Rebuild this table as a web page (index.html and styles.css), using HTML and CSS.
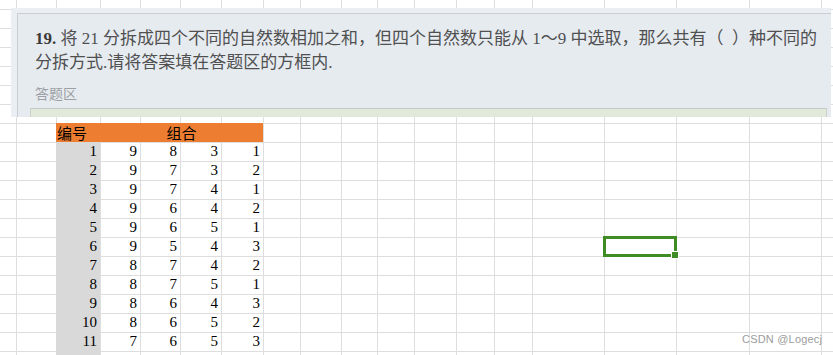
FILE: index.html
```html
<!DOCTYPE html>
<html lang="zh-CN">
<head>
<meta charset="utf-8">
<title>分拆组合</title>
<link rel="stylesheet" href="styles.css">
</head>
<body>
<div class="sheet">
  <div class="data">
    <div class="cell head">编号</div>
    <div class="cell head merged">组合</div>

    <div class="cell idx">1</div><div class="cell">9</div><div class="cell">8</div><div class="cell">3</div><div class="cell">1</div>
    <div class="cell idx">2</div><div class="cell">9</div><div class="cell">7</div><div class="cell">3</div><div class="cell">2</div>
    <div class="cell idx">3</div><div class="cell">9</div><div class="cell">7</div><div class="cell">4</div><div class="cell">1</div>
    <div class="cell idx">4</div><div class="cell">9</div><div class="cell">6</div><div class="cell">4</div><div class="cell">2</div>
    <div class="cell idx">5</div><div class="cell">9</div><div class="cell">6</div><div class="cell">5</div><div class="cell">1</div>
    <div class="cell idx">6</div><div class="cell">9</div><div class="cell">5</div><div class="cell">4</div><div class="cell">3</div>
    <div class="cell idx">7</div><div class="cell">8</div><div class="cell">7</div><div class="cell">4</div><div class="cell">2</div>
    <div class="cell idx">8</div><div class="cell">8</div><div class="cell">7</div><div class="cell">5</div><div class="cell">1</div>
    <div class="cell idx">9</div><div class="cell">8</div><div class="cell">6</div><div class="cell">4</div><div class="cell">3</div>
    <div class="cell idx">10</div><div class="cell">8</div><div class="cell">6</div><div class="cell">5</div><div class="cell">2</div>
    <div class="cell idx">11</div><div class="cell">7</div><div class="cell">6</div><div class="cell">5</div><div class="cell">3</div>
    <div class="cell idx"></div>
  </div>

  <div class="question">
    <div class="card">
      <p class="stem"><b class="num">19.</b> 将 21 分拆成四个不同的自然数相加之和，但四个自然数只能从 1～9 中选取，那么共有（&ensp;）种不同的<br>分拆方式.请将答案填在答题区的方框内.</p>
      <div class="answer-label">答题区</div>
      <div class="answer-box"></div>
    </div>
  </div>

  <div class="selection"><span class="handle"></span></div>
  <div class="watermark">CSDN @Logecj</div>
</div>
</body>
</html>
```

FILE: styles.css
```css
html, body {
  margin: 0;
  padding: 0;
  background: #ffffff;
}

.sheet {
  position: relative;
  width: 833px;
  height: 355px;
  overflow: hidden;
  padding: 123px 0 0 56px;
  box-sizing: border-box;
  background:
    linear-gradient(#dedede, #dedede) 16px 0 / 1px 100% no-repeat,
    linear-gradient(#dedede, #dedede) 56px 0 / 1px 100% no-repeat,
    linear-gradient(#dedede, #dedede) 100px 0 / 1px 100% no-repeat,
    linear-gradient(#dedede, #dedede) 140px 0 / 1px 100% no-repeat,
    linear-gradient(#dedede, #dedede) 180px 0 / 1px 100% no-repeat,
    linear-gradient(#dedede, #dedede) 221px 0 / 1px 100% no-repeat,
    linear-gradient(#dedede, #dedede) 263px 0 / 1px 100% no-repeat,
    linear-gradient(#dedede, #dedede) 300px 0 / 1px 100% no-repeat,
    linear-gradient(#dedede, #dedede) 341px 0 / 1px 100% no-repeat,
    linear-gradient(#dedede, #dedede) 377px 0 / 1px 100% no-repeat,
    linear-gradient(#dedede, #dedede) 414px 0 / 1px 100% no-repeat,
    linear-gradient(#dedede, #dedede) 456px 0 / 1px 100% no-repeat,
    linear-gradient(#dedede, #dedede) 494px 0 / 1px 100% no-repeat,
    linear-gradient(#dedede, #dedede) 532px 0 / 1px 100% no-repeat,
    linear-gradient(#dedede, #dedede) 604px 0 / 1px 100% no-repeat,
    linear-gradient(#dedede, #dedede) 676px 0 / 1px 100% no-repeat,
    linear-gradient(#dedede, #dedede) 749px 0 / 1px 100% no-repeat,
    linear-gradient(#dedede, #dedede) 821px 0 / 1px 100% no-repeat,
    repeating-linear-gradient(to bottom, transparent 0 9px, #dedede 9px 10px, transparent 10px 19px);
}

/* data block */
.data {
  display: grid;
  grid-template-columns: 44px 40px 40px 41px 42px;
  grid-auto-rows: 19px;
  width: 207px;
}

.cell {
  font-family: "Liberation Serif", "Noto Sans CJK SC", serif;
  font-size: 15px;
  line-height: 19px;
  color: #000;
  text-align: right;
  padding-right: 3px;
  white-space: nowrap;
}

.head {
  background: #ed7d31;
  font-family: "Noto Sans CJK SC", sans-serif;
  font-size: 15px;
  line-height: 20px;
  text-align: left;
  padding: 0 0 0 1px;
}

.merged {
  grid-column: span 4;
  text-align: center;
  padding-left: 0;
}

.idx {
  background: #d9d9d9;
}

/* pasted question panel */
.question {
  position: absolute;
  left: 11px;
  top: 8px;
  width: 820px;
  height: 109px;
  padding: 5px 0 0 6px;
  box-sizing: border-box;
  background: #ebeef2;
  overflow: hidden;
}

.card {
  height: 100%;
  box-sizing: border-box;
  background: #e6ebf0;
  border-top: 1px solid #c9ced4;
  border-left: 1px solid #c9ced4;
  padding: 13px 0 0 17px;
  display: flex;
  flex-direction: column;
}

.stem {
  margin: 0;
  font-family: "Liberation Serif", "Noto Sans CJK SC", serif;
  font-size: 17px;
  line-height: 24px;
  color: #505050;
  white-space: nowrap;
}

.num {
  color: #3a3a3a;
  font-weight: bold;
}

.answer-label {
  margin-top: 8px;
  font-family: "Noto Sans CJK SC", sans-serif;
  font-size: 14px;
  line-height: 20px;
  color: #9c9fa3;
}

.answer-box {
  margin: 5px 4px 0 -5px;
  flex: 1;
  background: #e1e9da;
  border-top: 1px solid #c5cbc4;
  border-left: 1px solid #ccd2ca;
  border-right: 1px solid #ccd2ca;
}

/* selected cell */
.selection {
  position: absolute;
  left: 603px;
  top: 236px;
  width: 74px;
  height: 21px;
  box-sizing: border-box;
  border: 3px solid #3f8b24;
}

.handle {
  position: absolute;
  right: -5px;
  bottom: -5px;
  width: 6px;
  height: 6px;
  background: #3f8b24;
  border: 1px solid #ffffff;
}

.watermark {
  position: absolute;
  left: 742px;
  top: 332px;
  font-family: "Liberation Sans", Arial, sans-serif;
  font-size: 11px;
  line-height: 14px;
  color: #9c9c9c;
  letter-spacing: 0.2px;
}
```
